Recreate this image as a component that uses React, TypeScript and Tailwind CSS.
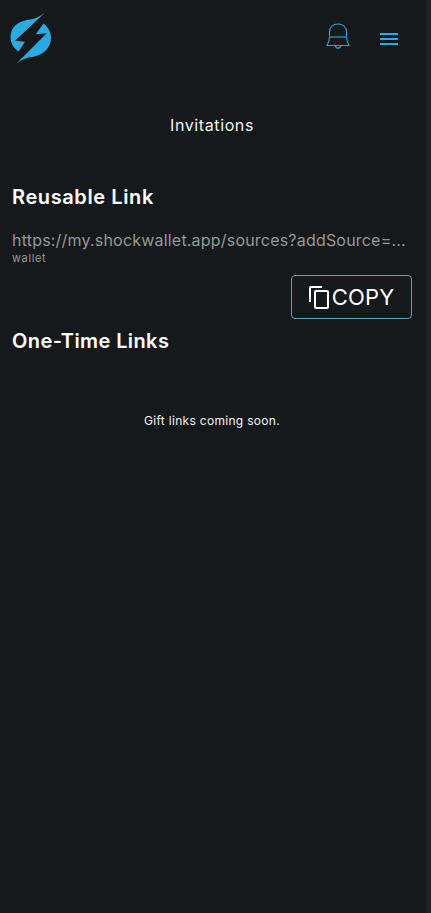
import React from "react";

const font = { fontFamily: "Inter, 'Liberation Sans', sans-serif" };

function Logo() {
  return (
    <svg width="42" height="52" viewBox="0 0 42 52" className="block">
      <path d="M35 0.5 C29 5 25 7 20 7.5 C8 9 0.5 15 0.5 25 C0.5 31 3.5 36 8.5 39.5 L15 29.8 L5 28.7 Z" fill="#29abe2" />
      <path d="M6.5 51.5 C11 47.5 17 45.5 23 44.7 C34 43 41 35 41 26 C41 20 38 15 33.5 11.5 L25.7 22.3 L36.7 21.3 Z" fill="#29abe2" />
    </svg>
  );
}

function Bell() {
  return (
    <svg width="24" height="26" viewBox="0 0 24 26" fill="none" stroke="#29abe2" strokeWidth="1.1" className="block">
      <path d="M3.5 13.5 V9.5 C3.5 4 7 1 12 1 C17 1 20.5 4 20.5 9.5 V13.5" />
      <path d="M3.5 14 H20.5" strokeWidth="1.3" opacity="0.85" />
      <path d="M3.5 14 C3.5 17 2.5 20 1 22.5 H23 C21.5 20 20.5 17 20.5 14" />
      <path d="M9.5 22.5 C9.5 26 14.5 26 14.5 22.5" />
    </svg>
  );
}

export default function App() {
  return (
    <div className="relative h-[913px] w-[431px] overflow-hidden bg-[#16191c] text-white" style={font}>
      <div className="flex h-full w-[427px] flex-col">
        <header className="flex h-[76px] items-start justify-between pl-[10px] pr-[29px] pt-[12px]">
          <Logo />
          <div className="flex items-start gap-[30px] pt-[11px]">
            <Bell />
            <div className="mt-[10px] flex w-[18px] flex-col gap-[3px]">
              <span className="h-[2px] bg-[#29abe2]" />
              <span className="h-[2px] bg-[#29abe2]" />
              <span className="h-[2px] bg-[#29abe2]" />
            </div>
          </div>
        </header>
        <h1 className="mt-[38px] ml-[-3px] text-center text-[16px] leading-[22px] font-normal tracking-[0.6px] text-[#f2f2f2]">Invitations</h1>
        <section className="mt-[47px] pl-[12px] pr-[15px]">
          <h2 className="text-[20px] leading-[28px] font-semibold tracking-[0.6px]">Reusable Link</h2>
          <p className="mt-[18px] whitespace-nowrap text-[16px] leading-[22px] tracking-[0.2px] text-[#95989a]">
            https://my.shockwallet.app/sources?addSource=...
          </p>
          <p className="mt-[1px] text-[11px] leading-[12px] tracking-[0.6px] text-[#95989a]">wallet</p>
          <div className="mt-[11px] flex justify-end">
            <button className="flex h-[44px] w-[121px] items-center justify-center gap-[3px] rounded-[4px] border border-[#5d9db8] text-[22px] tracking-[0.2px]">
              <svg width="20" height="23" viewBox="0 0 20 23" fill="none" stroke="#fff" strokeWidth="2" className="block">
                <path d="M13 1 H2 C1.4 1 1 1.4 1 2 V16" />
                <rect x="6" y="5" width="13" height="17" rx="1" />
              </svg>
              COPY
            </button>
          </div>
          <h2 className="mt-[8px] text-[20px] leading-[28px] font-semibold tracking-[0.4px]">One-Time Links</h2>
        </section>
        <p className="mt-[58px] ml-[-3px] text-center text-[12px] leading-[16px] tracking-[0.3px] text-[#f2f2f2]">Gift links coming soon.</p>
      </div>
      <div className="absolute right-0 top-0 h-full w-[5px] bg-[#1e2124]" />
    </div>
  );
}
